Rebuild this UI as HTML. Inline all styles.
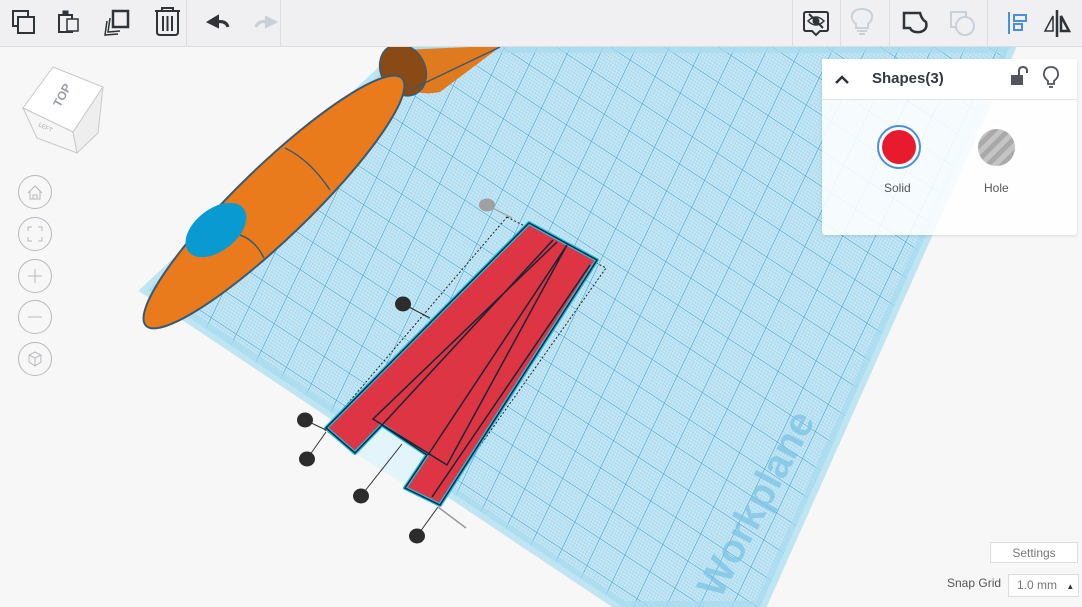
<!DOCTYPE html>
<html><head><meta charset="utf-8"><style>
html,body{margin:0;padding:0;width:1082px;height:607px;overflow:hidden;background:#f7f7f8;font-family:"Liberation Sans",sans-serif}
.tb{position:absolute;left:0;top:0;width:1082px;height:46px;background:#f0f0f2;border-bottom:1px solid #dcdde0}
.sep{position:absolute;top:0;width:1px;height:46px;background:#dcdde0}
</style></head><body>
<svg width="1082" height="607" style="position:absolute;left:0;top:0">
<defs>
<pattern id="minor" width="3" height="3" patternUnits="userSpaceOnUse" patternTransform="matrix(0.835 0.551 -0.43 0.903 0 0)">
<rect width="3" height="3" fill="#c6e7f5"/>
<path d="M0 0H3M0 0V3" stroke="#8ccae6" stroke-width="0.6"/>
</pattern>
<pattern id="major" width="30" height="30" patternUnits="userSpaceOnUse" patternTransform="matrix(0.835 0.551 -0.43 0.903 0 0)">
<path d="M0 0H30M0 0V30" stroke="#3d9dcb" stroke-width="1.1"/>
</pattern>
</defs>
<polygon points="148,290 409,47 1010,47 760,607 623,607" fill="url(#minor)"/>
<polygon points="148,290 409,47 1010,47 760,607 623,607" fill="url(#major)"/>
<polygon points="148,290 409,47 1010,47 760,607 623,607" fill="none" stroke="#a7dbf0" stroke-width="12" opacity="0.7"/>
<text x="0" y="0" transform="translate(720,600) rotate(-62)" font-size="40" font-weight="bold" fill="#7cc3e3" opacity="0.75" font-family="Liberation Sans">Workplane</text>
<!-- cylinder -->
<path d="M400,50 L470,47 L500,47 L440,92 Q420,96 410,88 Z" fill="#e07a1f"/>
<ellipse cx="403" cy="70" rx="22" ry="27" transform="rotate(-30 403 70)" fill="#8a4a15" stroke="#3a5a70" stroke-width="1.5"/>
<path d="M410,90 L500,47" stroke="#3a5a70" stroke-width="1.5" fill="none"/>
<!-- body -->
<ellipse cx="274" cy="202" rx="178" ry="36" transform="rotate(-44 274 202)" fill="#ea7b1c" stroke="#3a5a70" stroke-width="2"/>
<path d="M285,148 Q310,160 330,190" stroke="#3a5a70" stroke-width="1.5" fill="none"/>
<path d="M240,235 Q255,240 264,258" stroke="#3a5a70" stroke-width="1.5" fill="none"/>
<ellipse cx="216" cy="230" rx="35" ry="21" transform="rotate(-38 216 230)" fill="#0a9ad2"/>
<!-- selection -->
<polygon points="507,217 606,268 438,505 325,430" fill="none" stroke="#222" stroke-width="1" stroke-dasharray="2,2"/>
<polygon points="382,425 427,455 405,485 355,453" fill="#e4f4fb"/>
<polygon points="529,223 597,260 440,505 405,488 427,455 382,425 355,453 326,428" fill="#dd3543" stroke="#1cc0ea" stroke-width="4" stroke-linejoin="round"/>
<polygon points="529,223 597,260 440,505 405,488 427,455 382,425 355,453 326,428" fill="none" stroke="#1a2533" stroke-width="1.5"/>
<path d="M553,240 L382,425 M557,242 L373,419 L447,465 L567,245 M428,455 L567,245 M590,265 L432,497" stroke="#1a2533" stroke-width="1.5" fill="none"/>
<!-- handles -->
<g stroke="#333" stroke-width="1">
<line x1="487" y1="205" x2="512" y2="218" stroke="#999"/>
<line x1="403" y1="304" x2="430" y2="318"/>
<line x1="305" y1="420" x2="326" y2="430"/>
<line x1="307" y1="459" x2="326" y2="432"/>
<line x1="361" y1="496" x2="402" y2="444"/>
<line x1="417" y1="536" x2="438" y2="507"/>
<line x1="438" y1="507" x2="466" y2="528" stroke="#999" stroke-width="1.5"/>
</g>
<ellipse cx="487" cy="205" rx="8" ry="6.5" fill="#a0a0a0"/>
<g fill="#2c2c2c">
<ellipse cx="403" cy="304" rx="8" ry="7.5"/>
<ellipse cx="305" cy="420" rx="8" ry="7.5"/>
<ellipse cx="307" cy="459" rx="8" ry="7.5"/>
<ellipse cx="361" cy="496" rx="8" ry="7.5"/>
<ellipse cx="417" cy="536" rx="8" ry="7.5"/>
</g>
<!-- view cube -->
<polygon points="53,67 103,87 73,132 23,108" fill="#fff" stroke="#c8c8c8"/>
<polygon points="23,108 73,132 77,153 37,138" fill="#f6f6f6" stroke="#c8c8c8"/>
<polygon points="73,132 103,87 98,133 77,153" fill="#eee" stroke="#c8c8c8"/>
<text x="0" y="0" transform="translate(60,108) rotate(-62)" font-size="12" font-weight="bold" fill="#9a9ea6">TOP</text>
<text x="0" y="0" transform="translate(38,126) rotate(25)" font-size="6" fill="#aaa">LEFT</text>
<!-- nav -->
<g fill="none" stroke="#b5b8bd" stroke-width="1">
<circle cx="35" cy="192" r="16.5"/><circle cx="35" cy="234" r="16.5"/><circle cx="35" cy="276" r="16.5"/><circle cx="35" cy="317" r="16.5"/><circle cx="35" cy="359" r="16.5"/>
<path d="M28,193 L35,186 L42,193 M30,191 V199 H40 V191 M33,199 V195 H37 V199"/>
<path d="M28,231 V227 H32 M38,227 H42 V231 M42,237 V241 H38 M32,241 H28 V237"/>
<path d="M35,269 V283 M28,276 H42"/>
<path d="M28,317 H42"/>
<path d="M35,352 L41,355 V362 L35,366 L29,362 V355 Z M29,355 L35,358 L41,355 M35,358 V366"/>
</g>
</svg>
<div class="tb">
<div class="sep" style="left:186px"></div><div class="sep" style="left:280px"></div>
<div class="sep" style="left:792px"></div><div class="sep" style="left:840px"></div><div class="sep" style="left:889px"></div><div class="sep" style="left:987px"></div>
<svg width="1082" height="46" style="position:absolute;left:0;top:0" fill="none" stroke-width="2">
<g stroke="#2f3438">
<rect x="13" y="11" width="15" height="15"/><rect x="18" y="17" width="16" height="16" fill="#f0f0f2"/>
<rect x="59" y="15" width="13" height="17"/><rect x="67" y="19" width="11" height="12" fill="#f0f0f2" stroke-width="1.5"/><rect x="63" y="11" width="5" height="4" fill="#2f3438" stroke-width="1"/>
<path d="M107,21 L105,35 L118,34" stroke-width="1.5"/><path d="M110,18 L108,32 L120,31" stroke-width="1.5"/><rect x="113" y="11" width="15" height="16" stroke-width="2.5"/>
<path d="M155,11 H180 M162,11 V8 H173 V11 M157,12 V32 Q157,35 160,35 H175 Q178,35 178,32 V12 M163,16 V31 M167.5,16 V31 M172,16 V31" stroke-width="2"/>
<path d="M218,16 L208,22 L218,27 Z" fill="#2f3438"/><path d="M216,22 Q226,20 228,27" stroke-width="3"/>
</g>
<g stroke="#c9d0d8"><path d="M266,17 L276,22 L266,27 Z" fill="#c9d0d8"/><path d="M268,22 Q258,20 256,27" stroke-width="3"/></g>
<g stroke="#2f3438">
<path d="M806,12 H826 Q828,12 828,14 V29 Q828,31 826,31 H820 L816,35 L812,31 H806 Q804,31 804,29 V14 Q804,12 806,12 Z"/>
<path d="M808,21 Q816,13 824,21 Q816,29 808,21 Z" stroke-width="1.5"/><circle cx="816" cy="21" r="2.5" fill="#2f3438"/><path d="M809,14 L823,28"/>
<path d="M904,13 H920 Q922,20 926,22 Q928,30 920,32 Q912,33 910,28 H904 Z" stroke-width="2.5"/>
<path d="M1009,12 V34" stroke="#4a8ee0"/><rect x="1014" y="15" width="12" height="6" stroke="#4a8ee0"/><rect x="1014" y="24" width="8" height="6" stroke="#4a8ee0"/>
<path d="M1057,10 V37" stroke-width="2.5"/><path d="M1053,16 L1045,31 H1053 Z" stroke-width="1.5"/><path d="M1061,16 L1069,31 H1061 Z" stroke-width="2.5"/>
</g>
<g stroke="#c9d0d8">
<path d="M856,24 Q851,20 852,15 Q854,9 862,9 Q870,9 872,15 Q873,20 868,24 V28 H856 Z"/><path d="M857,31 H867 M859,34 H865"/>
<rect x="951" y="12" width="15" height="15"/><circle cx="965" cy="26" r="9" fill="#f0f0f2"/>
</g>
</svg>
</div>
<div style="position:absolute;left:822px;top:59px;width:255px;height:176px;background:rgba(255,255,255,0.86);border-radius:3px;box-shadow:0 1px 3px rgba(0,0,0,0.12)">
<div style="height:40px;background:#fff;border-bottom:1px solid #e2e3e6;position:relative">
<svg width="255" height="40" style="position:absolute;left:0;top:0" fill="none">
<path d="M14,24 L20,18 L26,24" stroke="#2f3438" stroke-width="2.5"/>
<rect x="189" y="16" width="12" height="10" fill="#50565c"/><path d="M197,16 V12 Q197,8 201,8 Q205,8 205,12 V14" stroke="#50565c" stroke-width="2"/>
<path d="M226,22 Q221,18 222,14 Q223,8 229,8 Q235,8 236,14 Q237,18 232,22 V25 H226 Z" stroke="#50565c" stroke-width="1.8"/><path d="M227,28 H231" stroke="#50565c" stroke-width="1.8"/>
</svg>
<div style="position:absolute;left:50px;top:11px;font-size:15px;color:#333a42;font-weight:bold">Shapes(3)</div>
</div>
<div style="position:absolute;left:55px;top:66px;width:44px;height:44px;border-radius:50%;border:2px solid #4a8ee0;box-sizing:border-box;background:#fff"><div style="margin:3px;width:34px;height:34px;border-radius:50%;background:#e81b2e"></div></div>
<div style="position:absolute;left:152px;top:66px;width:45px;height:45px;border-radius:50%;background:#fff"><div style="margin:4px;width:37px;height:37px;border-radius:50%;background:repeating-linear-gradient(135deg,#a9a9a9 0 5px,#c4c4c4 5px 10px)"></div></div>
<div style="position:absolute;left:62px;top:122px;font-size:12px;color:#555">Solid</div>
<div style="position:absolute;left:162px;top:122px;font-size:12px;color:#555">Hole</div>
</div>
<div style="position:absolute;left:990px;top:542px;width:88px;height:21px;border:1px solid #dcdde0;background:#fff;font-size:12px;color:#777;text-align:center;line-height:20px;box-sizing:border-box">Settings</div>
<div style="position:absolute;left:947px;top:576px;font-size:12px;color:#555">Snap Grid</div>
<div style="position:absolute;left:1008px;top:574px;width:71px;height:23px;border:1px solid #dcdde0;background:#fff;font-size:12px;color:#777;line-height:21px;padding-left:8px;box-sizing:border-box">1.0 mm <span style="font-size:8px;color:#333;margin-left:6px">▲</span></div>
</body></html>
